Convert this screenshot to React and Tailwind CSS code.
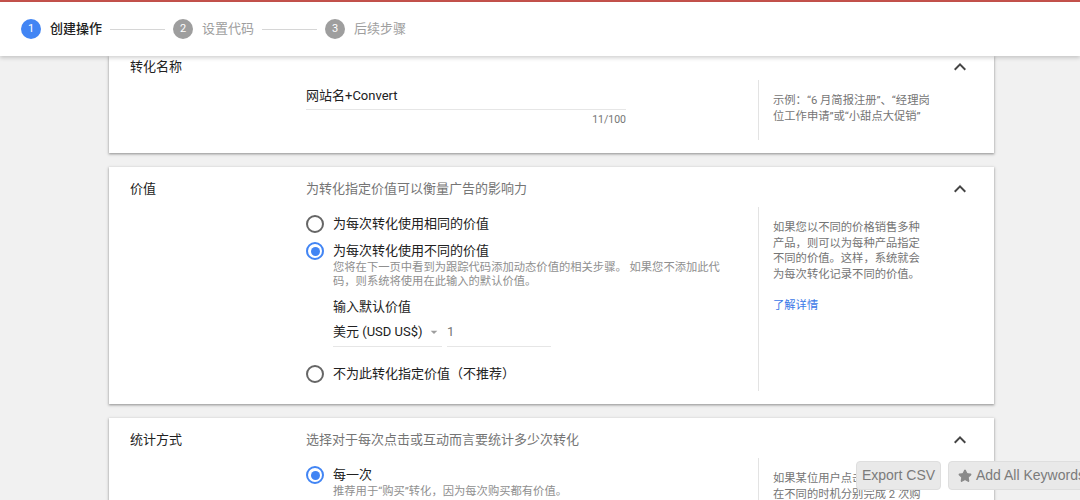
import { Star } from "lucide-react"

const ChevronUp = () => (
  <svg width="24" height="24" viewBox="0 0 24 24" className="text-[#444]">
    <path fill="currentColor" d="M12 8l-6 6 1.41 1.41L12 10.83l4.59 4.58L18 14z" />
  </svg>
)

const Radio = ({ checked }) =>
  checked ? (
    <span className="w-[18px] h-[18px] rounded-full border-2 border-[#4285f4] flex items-center justify-center shrink-0">
      <span className="w-[9px] h-[9px] rounded-full bg-[#4285f4]" />
    </span>
  ) : (
    <span className="w-[18px] h-[18px] rounded-full border-2 border-[#666] shrink-0" />
  )

const Step = ({ n, label, active }) => (
  <div className="flex items-center">
    <span className={`w-5 h-5 rounded-full text-white text-[11px] flex items-center justify-center ${active ? "bg-[#4285f4]" : "bg-[#9e9e9e]"}`}>{n}</span>
    <span className={`ml-[9px] text-[13px] ${active ? "text-[#212121] font-medium" : "text-[#9e9e9e]"}`}>{label}</span>
  </div>
)

const Card = ({ label, subtitle, top = "pt-[12px]", headH = "h-[20px]", bodyMt = "mt-2", children, helper }) => (
  <section className={`bg-white w-[885px] pl-[21px] pr-[22px] pb-[13px] ${top} shadow-[0_1px_2px_rgba(0,0,0,0.3),0_1px_3px_1px_rgba(0,0,0,0.1)]`}>
    <div className={`flex items-center ${headH}`}>
      <div className="w-[176px] text-[13px] text-[#212121]">{label}</div>
      <div className="flex-1 text-[13px] text-[#757575]">{subtitle}</div>
      <ChevronUp />
    </div>
    <div className={`flex ${bodyMt}`}>
      <div className="w-[176px]" />
      <div className="w-[452px]">{children}</div>
      <div className="border-l border-[#e3e3e3] pl-[14px] pt-[13px] w-[190px] text-[11.3px] leading-[15.7px] text-[#757575]">{helper}</div>
    </div>
  </section>
)

const App = () => {
  return (
    <div className="relative h-[500px] overflow-hidden bg-[#f1f1f1] font-[Roboto,'Noto_Sans_CJK_SC',sans-serif]">
      <div className="h-[2px] bg-[#c5524c]" />
      <header className="relative z-10 h-[54px] bg-white shadow-[0_2px_4px_rgba(0,0,0,0.18)] flex items-center pl-[21px]">
        <Step n="1" label="创建操作" active />
        <span className="w-[55px] h-px bg-[#d6d6d6] mx-[8px]" />
        <Step n="2" label="设置代码" />
        <span className="w-[55px] h-px bg-[#d6d6d6] mx-[8px]" />
        <Step n="3" label="后续步骤" />
      </header>

      <main className="flex flex-col gap-[14px] pl-[109px]">
        <Card label="转化名称" top="pt-0" headH="h-[22px]" bodyMt="mt-[2px]"
          helper={<p className="w-[160px]">示例：“6 月简报注册”、“经理岗位工作申请”或“小甜点大促销”</p>}>
          <div className="w-[320px] pt-[6px] pb-[13px]">
            <div className="h-5 flex items-center text-[13px] text-[#212121]">网站名+Convert</div>
            <div className="mt-[3px] border-b border-[#e6e6e6]" />
            <div className="mt-[3px] h-[14px] text-right text-[10.5px] text-[#757575] leading-[14px]">11/100</div>
          </div>
        </Card>

        <Card label="价值" subtitle="为转化指定价值可以衡量广告的影响力"
          helper={
            <>
              <p className="w-[150px]">如果您以不同的价格销售多种产品，则可以为每种产品指定不同的价值。这样，系统就会为每次转化记录不同的价值。</p>
              <p className="mt-[15px] text-[#3b78e7]">了解详情</p>
            </>
          }>
          <div className="pb-[7px]">
            <label className="mt-[7px] h-5 flex items-center gap-[9px] text-[13px] text-[#212121]">
              <Radio />为每次转化使用相同的价值
            </label>
            <label className="mt-[7px] h-5 flex items-center gap-[9px] text-[13px] text-[#212121]">
              <Radio checked />为每次转化使用不同的价值
            </label>
            <div className="pl-[27px]">
              <p className="w-[392px] text-[11.3px] leading-[14px] text-[#8f8f8f]">您将在下一页中看到为跟踪代码添加动态价值的相关步骤。 如果您不添加此代码，则系统将使用在此输入的默认价值。</p>
              <p className="mt-2 h-5 flex items-center text-[13px] text-[#212121]">输入默认价值</p>
              <div className="mt-[5px] flex gap-[5px]">
                <div className="w-[109px] shrink-0 border-b border-[#e6e6e6] pb-1">
                  <div className="h-5 flex items-center whitespace-nowrap text-[13px] text-[#212121]">
                    美元 (USD US$)
                    <svg width="16" height="16" viewBox="0 0 24 24" className="ml-[3px] shrink-0 text-[#9e9e9e]">
                      <path fill="currentColor" d="M7 10l5 5 5-5z" />
                    </svg>
                  </div>
                </div>
                <div className="w-[104px] border-b border-[#e6e6e6] pb-1">
                  <div className="h-5 flex items-center text-[13px] text-[#757575]">1</div>
                </div>
              </div>
            </div>
            <label className="mt-[17px] h-5 flex items-center gap-[9px] text-[13px] text-[#212121]">
              <Radio />不为此转化指定价值（不推荐）
            </label>
          </div>
        </Card>

        <Card label="统计方式" subtitle="选择对于每次点击或互动而言要统计多少次转化"
          helper={<p className="w-[150px]">如果某位用户点击广告后，<br />在不同的时机分别完成 2 次购买，则系统会统计 2 次转化。</p>}>
          <label className="mt-[7px] h-5 flex items-center gap-[9px] text-[13px] text-[#212121]">
            <Radio checked />每一次
          </label>
          <p className="pl-[27px] text-[11.3px] leading-[14px] text-[#8f8f8f]">推荐用于“购买”转化，因为每次购买都有价值。</p>
          <div className="h-20" />
        </Card>
      </main>

      <div className="absolute top-[461px] left-[856px] flex gap-[7px] font-['Liberation_Sans',sans-serif] text-[14px] text-[#7b7b7b] whitespace-nowrap">
        <button className="h-[29px] w-[85px] rounded-[4px] bg-[#e9e9e9] border border-[#dedede]">Export CSV</button>
        <button className="h-[29px] pl-[9px] pr-2 rounded-[4px] bg-[#e9e9e9] border border-[#dedede] flex items-center gap-[4px]">
          <Star size={14} fill="#8a8a8a" stroke="#8a8a8a" />Add All Keywords
        </button>
      </div>
    </div>
  )
}

export default App
